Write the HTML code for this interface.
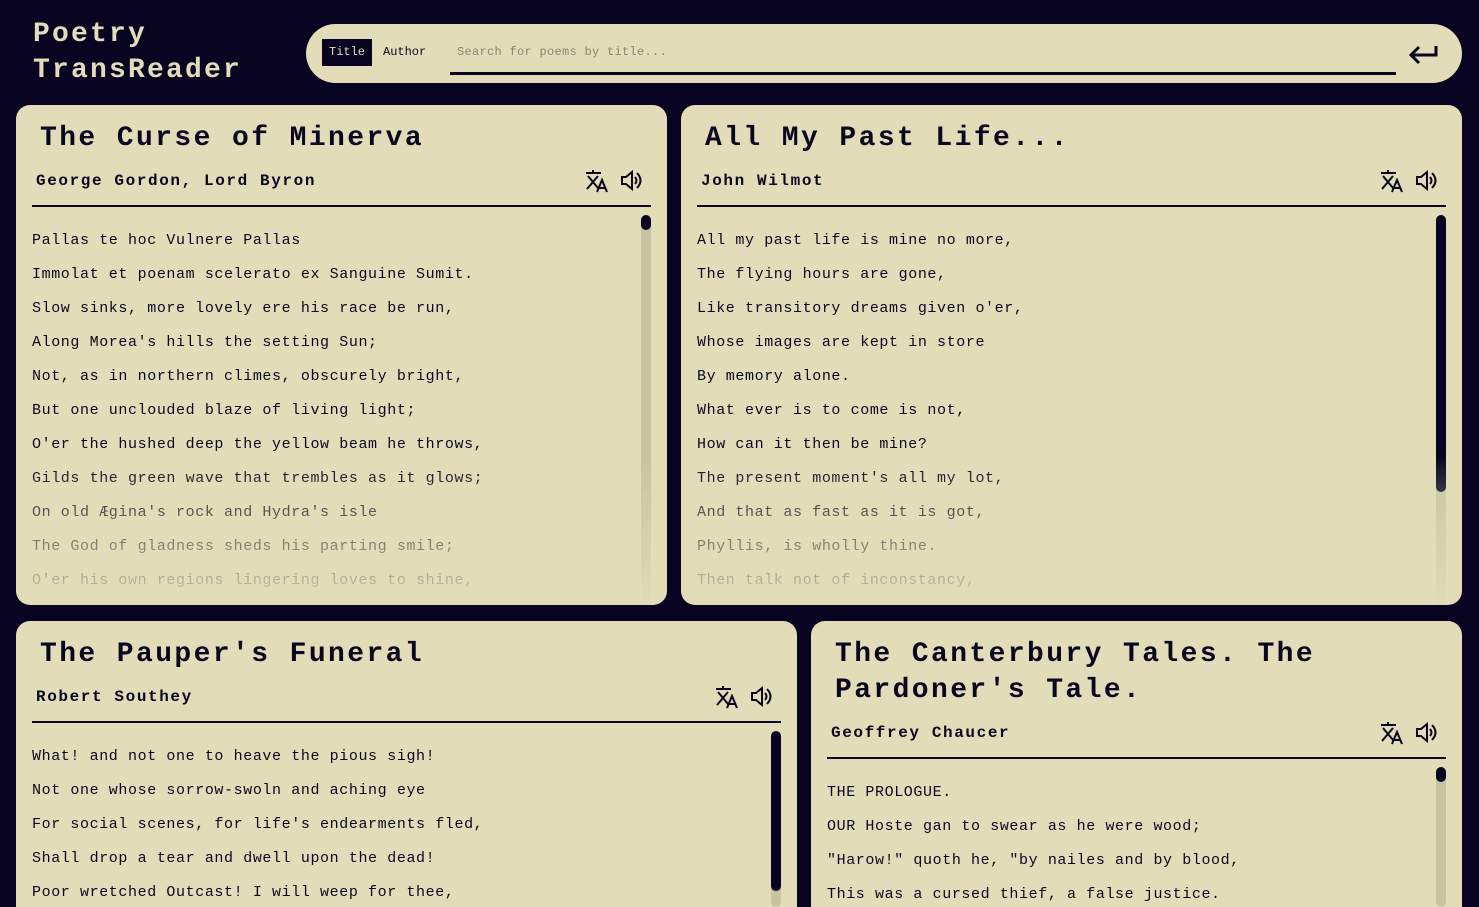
<!DOCTYPE html>
<html><head><meta charset="utf-8"><style>
*{margin:0;padding:0;box-sizing:border-box}
html{width:1479px;height:907px;overflow:hidden}
body{width:1479px;height:907px;overflow:hidden;background:#080422;font-family:"Liberation Mono",monospace;color:#0a0820;position:relative}
.logo{position:absolute;left:33px;top:17px;color:#e2dcb9;font-weight:bold;font-size:28px;letter-spacing:2.2px;line-height:36px}
.search{position:absolute;left:306px;top:24px;width:1156px;height:59px;background:#e2dcb9;border-radius:30px}
.tab{position:absolute;top:15px;height:27px;font-size:12px;line-height:27px;padding:0 7px}
.tab.on{left:16px;background:#080422;color:#e2dcb9}
.ph{position:absolute;left:151px;top:21px;font-size:12px;color:#8a8570;letter-spacing:.3px}
.ul{position:absolute;left:144px;top:48px;width:946px;height:2.5px;background:#080422}
.card{position:absolute;background:#e2dcb9;border-radius:14px;overflow:hidden}
.t{position:absolute;font-weight:bold;font-size:28px;letter-spacing:2.4px;line-height:36px;white-space:nowrap}
.a{position:absolute;font-weight:bold;font-size:16px;letter-spacing:1.6px;white-space:nowrap}
.ic{position:absolute;width:70px;height:26px}
.hr{position:absolute;height:2px;background:#0a0820}
.body{position:absolute;overflow:hidden;-webkit-mask-image:linear-gradient(#000 0,#000 var(--f),rgba(0,0,0,.05) 100%);mask-image:linear-gradient(#000 0,#000 var(--f),rgba(0,0,0,.05) 100%)}
.p{position:absolute;left:0;top:0;font-size:15px;letter-spacing:.6px;line-height:34px;white-space:nowrap}
.tr{position:absolute;width:10px;top:0;bottom:0;background:#c9c3a2;border-radius:5px}
.th{position:absolute;width:10px;top:0;background:#080422;border-radius:5px}
</style></head><body>
<div class="logo">Poetry<br>TransReader</div>
<div class="search">
<div class="tab on">Title</div><div class="tab" style="left:70px">Author</div>
<div class="ph">Search for poems by title...</div>
<div class="ul"></div>
<svg style="position:absolute;left:1102px;top:19px" width="32" height="22" viewBox="0 0 32 22"><path d="M28 3v9H4M11 4L3 12l8 8" fill="none" stroke="#080422" stroke-width="3"/></svg>
</div>

<div class="card" style="left:16px;top:105px;width:651px;height:500px">
<div class="t" style="left:24px;top:16px">The Curse of Minerva</div>
<div class="a" style="left:20px;top:67px">George Gordon, Lord Byron</div>
<svg class="ic" style="left:568px;top:63px" viewBox="0 0 70 26"><path d="M2 5h15M9 2v3M4 8l10 12M14 8 3 21M13 24l5-12 5 12M15 20h6" fill="none" stroke="#0a0820" stroke-width="2"/><path d="M38 9h4l6-5v17l-6-5h-4z" fill="none" stroke="#0a0820" stroke-width="2"/><path d="M51 9q3 3.5 0 7M53 5q7 7.5 0 15" fill="none" stroke="#0a0820" stroke-width="2"/></svg>
<div class="hr" style="left:16px;top:100px;width:619px"></div>
<div class="body" style="left:16px;top:110px;width:619px;height:390px;--f:62%">
<div class="p" style="top:9px">Pallas te hoc Vulnere Pallas<br>Immolat et poenam scelerato ex Sanguine Sumit.<br>Slow sinks, more lovely ere his race be run,<br>Along Morea's hills the setting Sun;<br>Not, as in northern climes, obscurely bright,<br>But one unclouded blaze of living light;<br>O'er the hushed deep the yellow beam he throws,<br>Gilds the green wave that trembles as it glows;<br>On old Ægina's rock and Hydra's isle<br>The God of gladness sheds his parting smile;<br>O'er his own regions lingering loves to shine,</div>
<div class="tr" style="left:609px"></div><div class="th" style="left:609px;height:15px"></div>
</div>
</div>

<div class="card" style="left:681px;top:105px;width:781px;height:500px">
<div class="t" style="left:24px;top:16px">All My Past Life...</div>
<div class="a" style="left:20px;top:67px">John Wilmot</div>
<svg class="ic" style="left:698px;top:63px" viewBox="0 0 70 26"><path d="M2 5h15M9 2v3M4 8l10 12M14 8 3 21M13 24l5-12 5 12M15 20h6" fill="none" stroke="#0a0820" stroke-width="2"/><path d="M38 9h4l6-5v17l-6-5h-4z" fill="none" stroke="#0a0820" stroke-width="2"/><path d="M51 9q3 3.5 0 7M53 5q7 7.5 0 15" fill="none" stroke="#0a0820" stroke-width="2"/></svg>
<div class="hr" style="left:16px;top:100px;width:749px"></div>
<div class="body" style="left:16px;top:110px;width:749px;height:390px;--f:62%">
<div class="p" style="top:9px">All my past life is mine no more,<br>The flying hours are gone,<br>Like transitory dreams given o'er,<br>Whose images are kept in store<br>By memory alone.<br>What ever is to come is not,<br>How can it then be mine?<br>The present moment's all my lot,<br>And that as fast as it is got,<br>Phyllis, is wholly thine.<br>Then talk not of inconstancy,</div>
<div class="tr" style="left:739px"></div><div class="th" style="left:739px;height:277px"></div>
</div>
</div>

<div class="card" style="left:16px;top:621px;width:781px;height:286px;border-radius:14px 14px 0 0">
<div class="t" style="left:24px;top:16px">The Pauper's Funeral</div>
<div class="a" style="left:20px;top:67px">Robert Southey</div>
<svg class="ic" style="left:698px;top:63px" viewBox="0 0 70 26"><path d="M2 5h15M9 2v3M4 8l10 12M14 8 3 21M13 24l5-12 5 12M15 20h6" fill="none" stroke="#0a0820" stroke-width="2"/><path d="M38 9h4l6-5v17l-6-5h-4z" fill="none" stroke="#0a0820" stroke-width="2"/><path d="M51 9q3 3.5 0 7M53 5q7 7.5 0 15" fill="none" stroke="#0a0820" stroke-width="2"/></svg>
<div class="hr" style="left:16px;top:100px;width:749px"></div>
<div class="body" style="left:16px;top:110px;width:749px;height:176px;--f:100%">
<div class="p" style="top:9px">What! and not one to heave the pious sigh!<br>Not one whose sorrow-swoln and aching eye<br>For social scenes, for life's endearments fled,<br>Shall drop a tear and dwell upon the dead!<br>Poor wretched Outcast! I will weep for thee,</div>
<div class="tr" style="left:739px"></div><div class="th" style="left:739px;height:160px"></div>
</div>
</div>

<div class="card" style="left:811px;top:621px;width:651px;height:286px;border-radius:14px 14px 0 0">
<div class="t" style="left:24px;top:16px">The Canterbury Tales. The<br>Pardoner's Tale.</div>
<div class="a" style="left:20px;top:103px">Geoffrey Chaucer</div>
<svg class="ic" style="left:568px;top:99px" viewBox="0 0 70 26"><path d="M2 5h15M9 2v3M4 8l10 12M14 8 3 21M13 24l5-12 5 12M15 20h6" fill="none" stroke="#0a0820" stroke-width="2"/><path d="M38 9h4l6-5v17l-6-5h-4z" fill="none" stroke="#0a0820" stroke-width="2"/><path d="M51 9q3 3.5 0 7M53 5q7 7.5 0 15" fill="none" stroke="#0a0820" stroke-width="2"/></svg>
<div class="hr" style="left:16px;top:136px;width:619px"></div>
<div class="body" style="left:16px;top:146px;width:619px;height:140px;--f:100%">
<div class="p" style="top:9px">THE PROLOGUE.<br>OUR Hoste gan to swear as he were wood;<br>"Harow!" quoth he, "by nailes and by blood,<br>This was a cursed thief, a false justice.</div>
<div class="tr" style="left:609px"></div><div class="th" style="left:609px;height:15px"></div>
</div>
</div>
</body></html>
